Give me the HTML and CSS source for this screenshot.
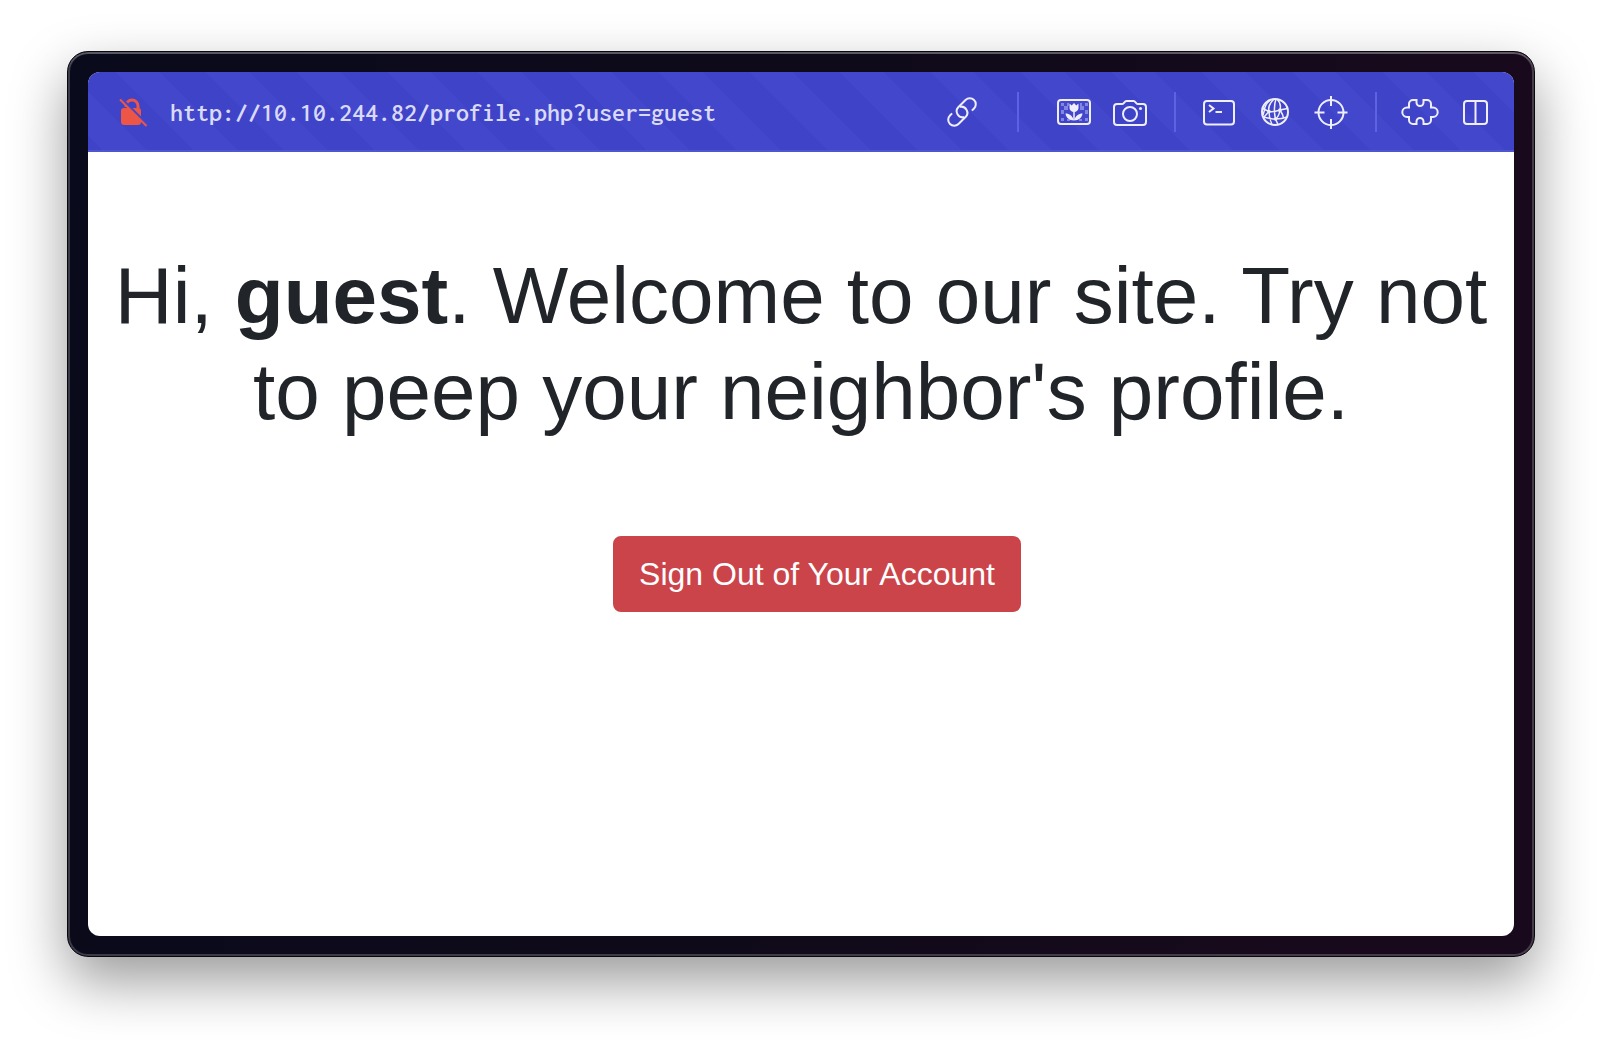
FILE: index.html
```html
<!DOCTYPE html>
<html lang="en">
<head>
<meta charset="utf-8">
<title>Welcome</title>
<link rel="stylesheet" href="styles.css">
</head>
<body>
<div class="window">
  <div class="screen">
    <header class="toolbar">
      <svg class="lock" viewBox="0 0 40 40" aria-hidden="true">
        <path class="lock-bow" d="M14 15v-1a6 6 0 0 1 12 0V20"/>
        <rect class="lock-body" x="9" y="16" width="20" height="17" rx="3"/>
        <path class="lock-gap" d="M9 6.500 36 33.500"/>
        <path class="lock-slash" d="M8 7.500 34.500 34"/>
      </svg>
      <input class="url" type="text" aria-label="Address" value="http://10.10.244.82/profile.php?user=guest">
      <button class="tool" aria-label="Copy link">
        <svg viewBox="0 0 40 40">
          <g transform="rotate(-45 20 20)">
            <path d="M28 26h3a6 6 0 0 0 0-12H21a6 6 0 0 0-3 11.200"/>
            <path d="M12 14H9a6 6 0 0 0 0 12h10a6 6 0 0 0 3-11.200"/>
          </g>
        </svg>
      </button>
      <span class="divider divider-wide"></span>
      <button class="tool" aria-label="Images">
        <svg viewBox="0 0 40 40">
          <rect x="4" y="8" width="32" height="24" rx="3"/>
          <path class="checks" d="M7 11h3v3H7zM13 11h2v3h-2zM26 11h2v3h-2zM10 14h4v4h-4zM26 14h4v4h-4zM31 11h3v3h-3zM7 18h3v4H7zM31 18h3v4h-3zM7 26h3v3H7zM13 27h3v2h-3zM25 27h3v2h-3zM31 26h3v3h-3z"/>
          <path class="solid" d="M15.500 11.500l2.200 2 2.300-2.500 2.300 2.500 2.200-2v4.500a4.500 4 0 0 1-9 0zM11.500 21.500c4 0 7 2.500 8.500 7-5 0-8-3-8.500-7zM28.500 21.500c-4 0-7 2.500-8.500 7 5 0 8-3 8.500-7z"/>
          <path class="fine" d="M20 19v9"/>
        </svg>
      </button>
      <button class="tool" aria-label="Capture page">
        <svg viewBox="0 0 40 40">
          <path d="M7 12h5.500c1.500 0 2-3 4-3h7c2 0 2.500 3 4 3H33a3 3 0 0 1 3 3v15a3 3 0 0 1-3 3H7a3 3 0 0 1-3-3V15a3 3 0 0 1 3-3z"/>
          <circle cx="20" cy="22" r="7"/>
          <circle class="solid" cx="30.500" cy="16.500" r="1.500"/>
        </svg>
      </button>
      <span class="divider"></span>
      <button class="tool" aria-label="Console">
        <svg viewBox="0 0 40 40">
          <rect x="5" y="9" width="30" height="23.500" rx="3"/>
          <path d="M10 13l4.500 3.500L10 20M16.500 20H23"/>
        </svg>
      </button>
      <button class="tool" aria-label="Network">
        <svg viewBox="0 0 40 40">
          <circle cx="20" cy="20" r="13"/>
          <path class="fine" d="M7.500 16.500 14 19.500c4 .5 7 0 11-1.500l7.500-1.500M8 25c4 1 8 2 12.500 2s8-.5 11.500-2M19 7c-4 4-6 9-5 12.500 0 5 1 9 3 13M21 7c-2 5-2 14-.5 20l2.500 5.500M22 7c3 3 4 7 3 11-.5 4-2 7-4.500 9M15.500 8c-4 3-6 7-6 10.500"/>
          <path class="fine" d="M9.500 18 8 23M25 18c2 3 3 5 3.500 8M14 19.500 9 25"/>
          <circle class="solid" cx="14" cy="19.500" r="1.800"/>
          <circle class="solid" cx="25" cy="18" r="1.800"/>
          <circle class="solid" cx="20.500" cy="27" r="1.800"/>
        </svg>
      </button>
      <button class="tool" aria-label="Inspect">
        <svg viewBox="0 0 40 40">
          <circle cx="20" cy="20.500" r="12.500"/>
          <path d="M20 4v10M20 27v10M3.500 20.500h10M26.500 20.500h10"/>
        </svg>
      </button>
      <span class="divider"></span>
      <button class="tool" aria-label="Extensions">
        <svg viewBox="0 0 40 40">
          <path d="M13 8h3.500v2.500a3.500 3.500 0 0 0 7 0V8H27a4 4 0 0 1 4 4v3.500h2a4.700 4.700 0 0 1 0 9.400h-2V28a4 4 0 0 1-4 4h-3.500v-2.500a3.500 3.500 0 0 0-7 0V32H13a4 4 0 0 1-4-4v-3.100H7a4.700 4.700 0 0 1 0-9.400h2V12a4 4 0 0 1 4-4z"/>
        </svg>
      </button>
      <button class="tool" aria-label="Split view">
        <svg viewBox="0 0 40 40">
          <rect x="8" y="9" width="23" height="23" rx="3"/>
          <path d="M19.500 9v23"/>
        </svg>
      </button>
    </header>
    <main class="page">
      <h1 class="greeting">Hi, <b>guest</b>. Welcome to our site. Try not to peep your neighbor's profile.</h1>
      <p class="actions"><a class="btn-danger" href="#">Sign Out of Your Account</a></p>
    </main>
  </div>
</div>
</body>
</html>
```
FILE: styles.css
```css
* {
  box-sizing: border-box;
}

body {
  margin: 0;
  min-height: 100vh;
  padding: 51px 67px 83px;
  display: flex;
  background: #fff;
  font-family: "Helvetica Neue", "Liberation Sans", Arial, sans-serif;
  color: #212529;
}

.window {
  flex: 1;
  min-width: 0;
  display: flex;
  padding: 20px;
  border: 1px solid #08080c;
  border-radius: 21px;
  background: linear-gradient(100deg, #090a1b, #0f0a1a 50%, #180a1c 90%);
  background-origin: border-box;
  box-shadow:
    inset 0 0 0 2px rgba(255, 255, 255, 0.2),
    inset 0 2px 0 rgba(255, 255, 255, 0.15),
    0 24px 56px rgba(0, 0, 0, 0.4);
}

.screen {
  flex: 1;
  min-width: 0;
  display: flex;
  flex-direction: column;
  border-radius: 12px;
  overflow: hidden;
  background: #fff;
}

.toolbar {
  display: flex;
  align-items: center;
  height: 80px;
  padding: 0 10px 0 24px;
  background: repeating-linear-gradient(45deg,
    #3f43c8 0 12px, #4347cb 12px 43px, #3f43c8 43px 64px);
  box-shadow: inset 0 -2px 0 #5054ce;
}

.lock {
  width: 40px;
  height: 40px;
  flex: none;
}

.lock-bow {
  fill: none;
  stroke: #ed5547;
  stroke-width: 3;
}

.lock-body {
  fill: #ed5547;
}

.lock-gap {
  stroke: #4146ca;
  stroke-width: 3;
}

.lock-slash {
  stroke: #ed5547;
  stroke-width: 2;
}

.url {
  flex: 1;
  min-width: 0;
  height: 40px;
  margin: 0 0 0 18px;
  padding: 0;
  border: 0;
  outline: 0;
  background: transparent;
  color: #d9daf8;
  font: 600 26px "Inconsolata", "Noto Sans Mono CJK JP", monospace;
}

.tool {
  width: 56px;
  height: 56px;
  flex: none;
  display: grid;
  place-items: center;
  padding: 0;
  border: 0;
  background: none;
  color: #eeeefc;
}

.tool svg {
  width: 40px;
  height: 40px;
  fill: none;
  stroke: currentColor;
  stroke-width: 2;
}

.tool .fine {
  stroke-width: 1.500;
}

.tool .solid {
  fill: currentColor;
  stroke: none;
}

.tool .checks {
  fill: #8386e0;
  stroke: none;
}

.divider {
  width: 2px;
  height: 40px;
  flex: none;
  margin: 0 15px 0 16px;
  background: #5e62e2;
}

.divider-wide {
  margin: 0 27px;
}

.page {
  flex: 1;
  padding: 96px 0;
  text-align: center;
}

.greeting {
  margin: 0 0 96px;
  font-size: 80px;
  line-height: 96px;
  font-weight: 400;
}

.actions {
  margin: 0;
}

.btn-danger {
  display: inline-block;
  margin-left: 32px;
  padding: 12px 24px;
  border: 2px solid #cb444a;
  border-radius: 8px;
  background: #cb444a;
  color: #fff;
  font-size: 32px;
  line-height: 48px;
  text-decoration: none;
}
```
